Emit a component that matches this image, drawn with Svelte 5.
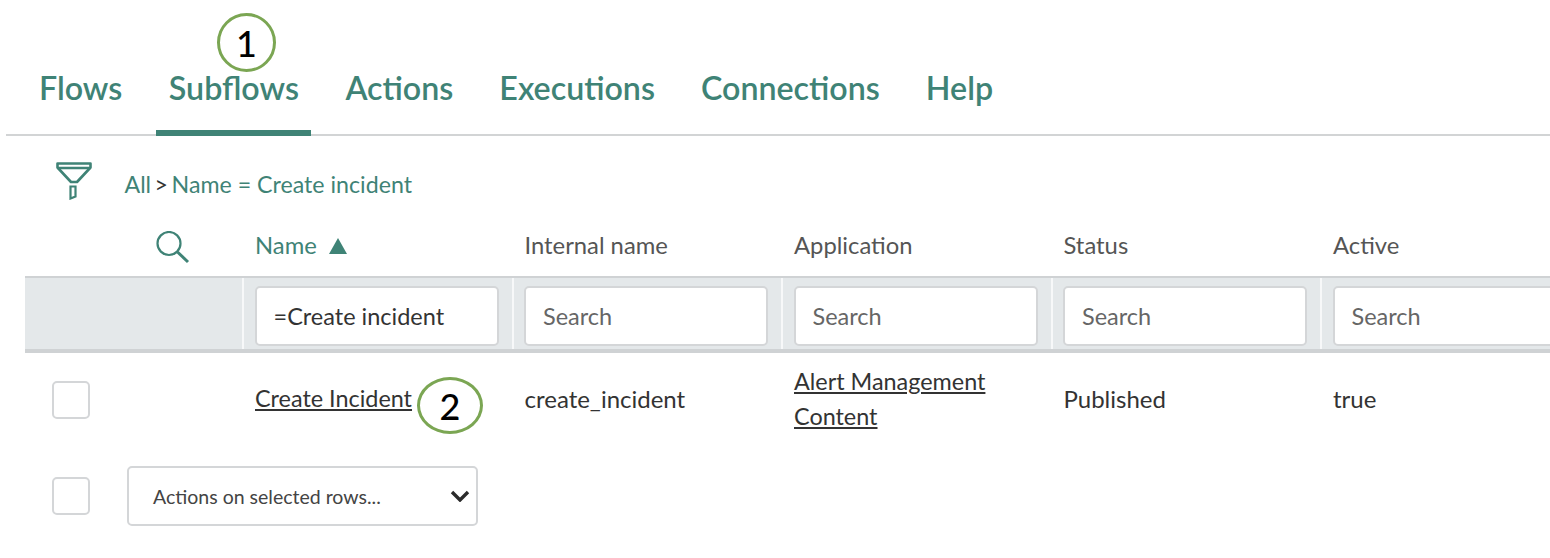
<script lang="ts">
  // Subflows-Liste mit zwei nummerierten Markierungen.
  const tabs = ['Flows', 'Subflows', 'Actions', 'Executions', 'Connections', 'Help'];
  const active = 'Subflows';
  const columns = [
    { label: 'Name', value: '=Create incident', sorted: true },
    { label: 'Internal name', value: '' },
    { label: 'Application', value: '' },
    { label: 'Status', value: '' },
    { label: 'Active', value: '' }
  ];
</script>

<main>
  <nav class="tabs">
    {#each tabs as tab}
      <a href="#top" class="tab" class:active={tab === active}>{tab}</a>
    {/each}
  </nav>

  <div class="crumbs">
    <svg class="funnel" width="36" height="38" viewBox="0 0 36 38" fill="none" stroke="#3f8376" stroke-width="2.6">
      <path d="M1.500 1.500h33v4L21 20h-6L1.500 5.500z" stroke-linejoin="round" />
      <path d="M1.500 6h33" />
      <path d="M14.500 24.500h5v10l-5 2z" stroke-width="2.200" />
    </svg>
    <span>All</span><span class="sep">&gt;</span><span>Name = Create incident</span>
  </div>

  <div class="grid">
    <div class="head first">
      <svg width="34" height="33" viewBox="0 0 34 33" fill="none" stroke="#3f8376" stroke-width="2.200">
        <circle cx="13" cy="12.500" r="11.500" />
        <path d="M21.500 21l10.500 10" stroke-width="3" />
      </svg>
    </div>
    {#each columns as col}
      <div class="head" class:sorted={col.sorted}>
        {col.label}
        {#if col.sorted}<span class="arrow"></span>{/if}
      </div>
    {/each}

    <div class="filter first"></div>
    {#each columns as col}
      <div class="filter">
        <input type="text" placeholder="Search" value={col.value} />
      </div>
    {/each}

    <div class="cell first"><span class="check"></span></div>
    <div class="cell"><a href="#top">Create Incident</a></div>
    <div class="cell">create_incident</div>
    <div class="cell"><a href="#top" class="wrap">Alert Management Content</a></div>
    <div class="cell">Published</div>
    <div class="cell">true</div>
  </div>

  <div class="footer">
    <span class="check"></span>
    <div class="select">
      <span>Actions on selected rows...</span>
      <svg width="20" height="12" viewBox="0 0 20 12" fill="none" stroke="#2b2b2b" stroke-width="3.400">
        <path d="M2 2l8 8 8-8" />
      </svg>
    </div>
  </div>

  <span class="mark one">1</span>
  <span class="mark two">2</span>
</main>

<style>
  :global(body) {
    margin: 0;
    background: #fff;
    font-family: Lato, 'Noto Sans', sans-serif;
    color: #333;
  }

  main {
    position: relative;
    width: 1550px;
    height: 558px;
    overflow: hidden;
  }

  .tabs {
    display: flex;
    height: 134px;
    margin-left: 6px;
    padding-left: 21px;
    border-bottom: 2px solid #d2d4d5;
  }

  .tab {
    display: flex;
    align-items: flex-end;
    box-sizing: border-box;
    height: 136px;
    padding: 0 12px 28px;
    margin-right: 22px;
    font-size: 32.200px;
    font-weight: 600;
    line-height: 40px;
    color: #3f8376;
    text-decoration: none;
  }

  .tab.active {
    padding: 0 12.500px 28px;
    box-shadow: inset 0 -6px 0 #3f8376;
  }

  .crumbs {
    display: flex;
    align-items: flex-start;
    height: 88px;
    margin-left: 56px;
    padding-top: 24px;
    box-sizing: border-box;
    font-size: 23.200px;
    color: #3f8376;
    line-height: 48px;
  }

  .funnel {
    margin: 2px 32.500px 0 0;
  }

  .sep {
    margin: 0 3.500px;
    color: #333;
  }

  .grid {
    display: grid;
    grid-template-columns: 217px repeat(5, 269.5px);
    grid-template-rows: 52px 77px 114px;
    margin-left: 25px;
  }

  .head {
    display: flex;
    align-items: center;
    gap: 12px;
    padding: 0 0 10px 13px;
    font-size: 23.800px;
    color: #555;
  }

  .head.first {
    justify-content: flex-end;
    padding: 0 52px 6px 0;
  }

  .head.sorted {
    color: #3f8376;
  }

  .arrow {
    width: 0;
    height: 0;
    margin-top: 2px;
    border-left: 9.500px solid transparent;
    border-right: 9.500px solid transparent;
    border-bottom: 16px solid #3f8376;
  }

  .filter {
    display: flex;
    align-items: center;
    box-sizing: border-box;
    padding: 4px 0 0 12.500px;
    background: #e4e8ea;
    border-top: 2px solid #cfd2d4;
    border-bottom: 4px solid #cfd2d4;
    box-shadow: inset 2px 0 0 #f7f8f9;
  }

  .filter.first {
    box-shadow: none;
  }

  input {
    width: 244px;
    height: 60px;
    box-sizing: border-box;
    padding: 0 17px;
    border: 2px solid #d4d6d8;
    border-radius: 5px;
    background: #fff;
    font: inherit;
    font-size: 23.500px;
    color: #333;
    outline: none;
  }

  input::placeholder {
    color: #666;
    opacity: 1;
  }

  .cell {
    display: flex;
    align-items: center;
    padding: 0 13px 24px;
    font-size: 24px;
    line-height: 35px;
    color: #333;
  }

  .cell.first {
    padding: 0 0 20px 27px;
  }

  .cell a {
    color: #333;
    font-size: 23.400px;
  }

  .wrap {
    max-width: 210px;
    margin-top: 2px;
  }

  .check {
    display: block;
    width: 38px;
    height: 38px;
    box-sizing: border-box;
    border: 2px solid #d4d6d8;
    border-radius: 5px;
    background: #fff;
  }

  .footer {
    display: flex;
    align-items: center;
    gap: 37px;
    margin-left: 52px;
    margin-top: -1px;
  }

  .select {
    display: flex;
    align-items: center;
    justify-content: space-between;
    width: 351px;
    height: 60px;
    box-sizing: border-box;
    padding: 0 6px 0 24px;
    border: 2px solid #d4d6d8;
    border-radius: 5px;
    font-size: 19.500px;
    color: #444;
  }

  .mark {
    position: absolute;
    box-sizing: border-box;
    display: flex;
    align-items: center;
    justify-content: center;
    border: 3px solid #7ba653;
    border-radius: 50%;
    background: #fff;
    font-size: 36px;
    font-weight: 500;
    color: #000;
  }

  .one {
    left: 217px;
    top: 13px;
    width: 59px;
    height: 59px;
  }

  .two {
    left: 417px;
    top: 377px;
    width: 66px;
    height: 57px;
  }
</style>
